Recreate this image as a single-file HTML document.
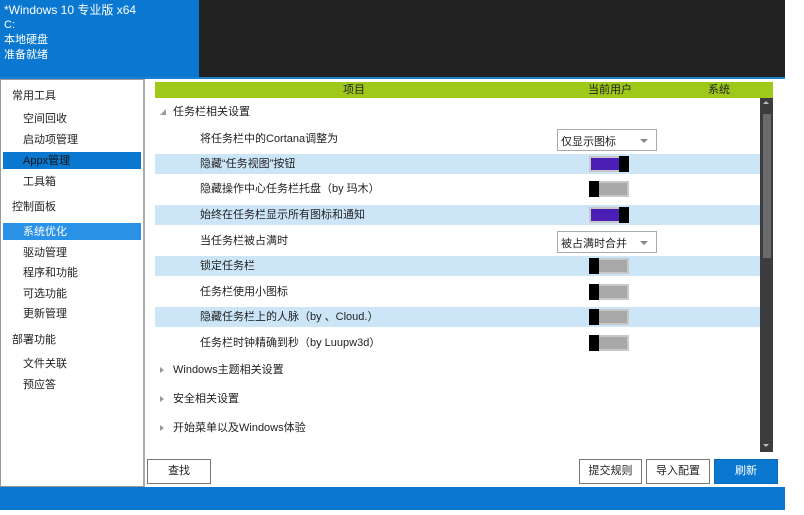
<!DOCTYPE html><html><head><meta charset="utf-8"><style>
*{margin:0;padding:0;box-sizing:border-box}
body{width:804px;height:515px;background:#fff;position:relative;overflow:hidden;font-family:"Liberation Sans","Noto Sans CJK SC",sans-serif;font-size:11px;color:#222}
.a{position:absolute}
.t{position:absolute;white-space:nowrap;line-height:14px}
.hl{position:absolute;left:155px;width:605px;height:20px;background:#cce6f8}
.tg{position:absolute;left:589px;width:40px;height:16px;border:2px solid #c8c8c8}
.on{background:#4b1fb5}.on::after{content:"";position:absolute;right:-2px;top:-2px;width:10px;height:16px;background:#000}
.off{background:#a8a8a8}.off::after{content:"";position:absolute;left:-2px;top:-2px;width:10px;height:16px;background:#000}
.dd{position:absolute;left:557px;width:100px;height:22px;border:1px solid #aaa;background:#fff;padding:3px 0 0 3px}
.dd::after{content:"";position:absolute;right:8px;top:9px;border:4px solid transparent;border-top:4px solid #888}
.btn{position:absolute;top:459px;height:25px;border:1px solid #777;background:#fff;text-align:center;line-height:23px}
.arr{position:absolute;left:160px;border:3px solid transparent;border-left:4px solid #999}
</style></head><body>
<div class="a" style="left:0;top:0;width:199px;height:77px;background:#0a78d0"></div>
<div class="a" style="left:199px;top:0;width:586px;height:77px;background:#222"></div>
<div class="a" style="left:0;top:77px;width:785px;height:2px;background:#1a80d0"></div>
<div class="t" style="left:4px;top:3px;color:#fff;font-size:12px">*Windows 10 专业版 x64</div>
<div class="t" style="left:4px;top:18px;color:#fff">C:</div>
<div class="t" style="left:4px;top:33px;color:#fff">本地硬盘</div>
<div class="t" style="left:4px;top:48px;color:#fff">准备就绪</div>
<div class="a" style="left:0;top:79px;width:144px;height:408px;border:1px solid #999;background:#fff"></div>
<div class="a" style="left:143px;top:79px;width:2px;height:408px;background:#aaa"></div>
<div class="t" style="left:12px;top:89px">常用工具</div>
<div class="t" style="left:23px;top:112px">空间回收</div>
<div class="t" style="left:23px;top:133px">启动项管理</div>
<div class="a" style="left:3px;top:152px;width:138px;height:17px;background:#0a78d0"></div>
<div class="t" style="left:23px;top:154px;color:#111">Appx管理</div>
<div class="t" style="left:23px;top:175px">工具箱</div>
<div class="t" style="left:12px;top:200px">控制面板</div>
<div class="a" style="left:3px;top:223px;width:138px;height:17px;background:#2a92e6"></div>
<div class="t" style="left:23px;top:225px;color:#fff">系统优化</div>
<div class="t" style="left:23px;top:246px">驱动管理</div>
<div class="t" style="left:23px;top:266px">程序和功能</div>
<div class="t" style="left:23px;top:287px">可选功能</div>
<div class="t" style="left:23px;top:307px">更新管理</div>
<div class="t" style="left:12px;top:333px">部署功能</div>
<div class="t" style="left:23px;top:357px">文件关联</div>
<div class="t" style="left:23px;top:378px">预应答</div>
<div class="a" style="left:155px;top:82px;width:618px;height:16px;background:#9ec81a"></div>
<div class="t" style="left:343px;top:83px">项目</div>
<div class="t" style="left:588px;top:83px">当前用户</div>
<div class="t" style="left:708px;top:83px">系统</div>
<div class="a" style="left:760px;top:98px;width:13px;height:354px;background:#3c3c3e"></div>
<div class="a" style="left:763px;top:114px;width:8px;height:144px;background:#6a6a6a"></div>
<div class="a" style="left:763px;top:101px;border:3px solid transparent;border-bottom:3px solid #bbb;border-top:0"></div>
<div class="a" style="left:763px;top:444px;border:3px solid transparent;border-top:3px solid #bbb;border-bottom:0"></div>
<div class="a" style="left:160px;top:109px;border:3px solid transparent;border-bottom:3px solid #999;border-right:3px solid #999"></div>
<div class="t" style="left:173px;top:105px">任务栏相关设置</div>
<div class="hl" style="top:154px"></div><div class="hl" style="top:205px"></div><div class="hl" style="top:256px"></div><div class="hl" style="top:307px"></div>
<div class="t" style="left:200px;top:132px">将任务栏中的Cortana调整为</div>
<div class="dd" style="top:129px">仅显示图标</div>
<div class="t" style="left:200px;top:157px">隐藏“任务视图”按钮</div><div class="tg on" style="top:156px"></div>
<div class="t" style="left:200px;top:182px">隐藏操作中心任务栏托盘（by 玛木）</div><div class="tg off" style="top:181px"></div>
<div class="t" style="left:200px;top:208px">始终在任务栏显示所有图标和通知</div><div class="tg on" style="top:207px"></div>
<div class="t" style="left:200px;top:234px">当任务栏被占满时</div>
<div class="dd" style="top:231px">被占满时合并</div>
<div class="t" style="left:200px;top:259px">锁定任务栏</div><div class="tg off" style="top:258px"></div>
<div class="t" style="left:200px;top:285px">任务栏使用小图标</div><div class="tg off" style="top:284px"></div>
<div class="t" style="left:200px;top:310px">隐藏任务栏上的人脉（by 、Cloud.）</div><div class="tg off" style="top:309px"></div>
<div class="t" style="left:200px;top:336px">任务栏时钟精确到秒（by Luupw3d）</div><div class="tg off" style="top:335px"></div>
<div class="arr" style="top:367px"></div><div class="t" style="left:173px;top:363px">Windows主题相关设置</div>
<div class="arr" style="top:396px"></div><div class="t" style="left:173px;top:392px">安全相关设置</div>
<div class="arr" style="top:425px"></div><div class="t" style="left:173px;top:421px">开始菜单以及Windows体验</div>
<div class="btn" style="left:147px;width:64px">查找</div>
<div class="btn" style="left:579px;width:63px">提交规则</div>
<div class="btn" style="left:646px;width:64px">导入配置</div>
<div class="btn" style="left:714px;width:64px;background:#0a78d0;border-color:#0a68b8;color:#fff">刷新</div>
<div class="a" style="left:0;top:487px;width:785px;height:23px;background:#0a78d0"></div>
</body></html>
